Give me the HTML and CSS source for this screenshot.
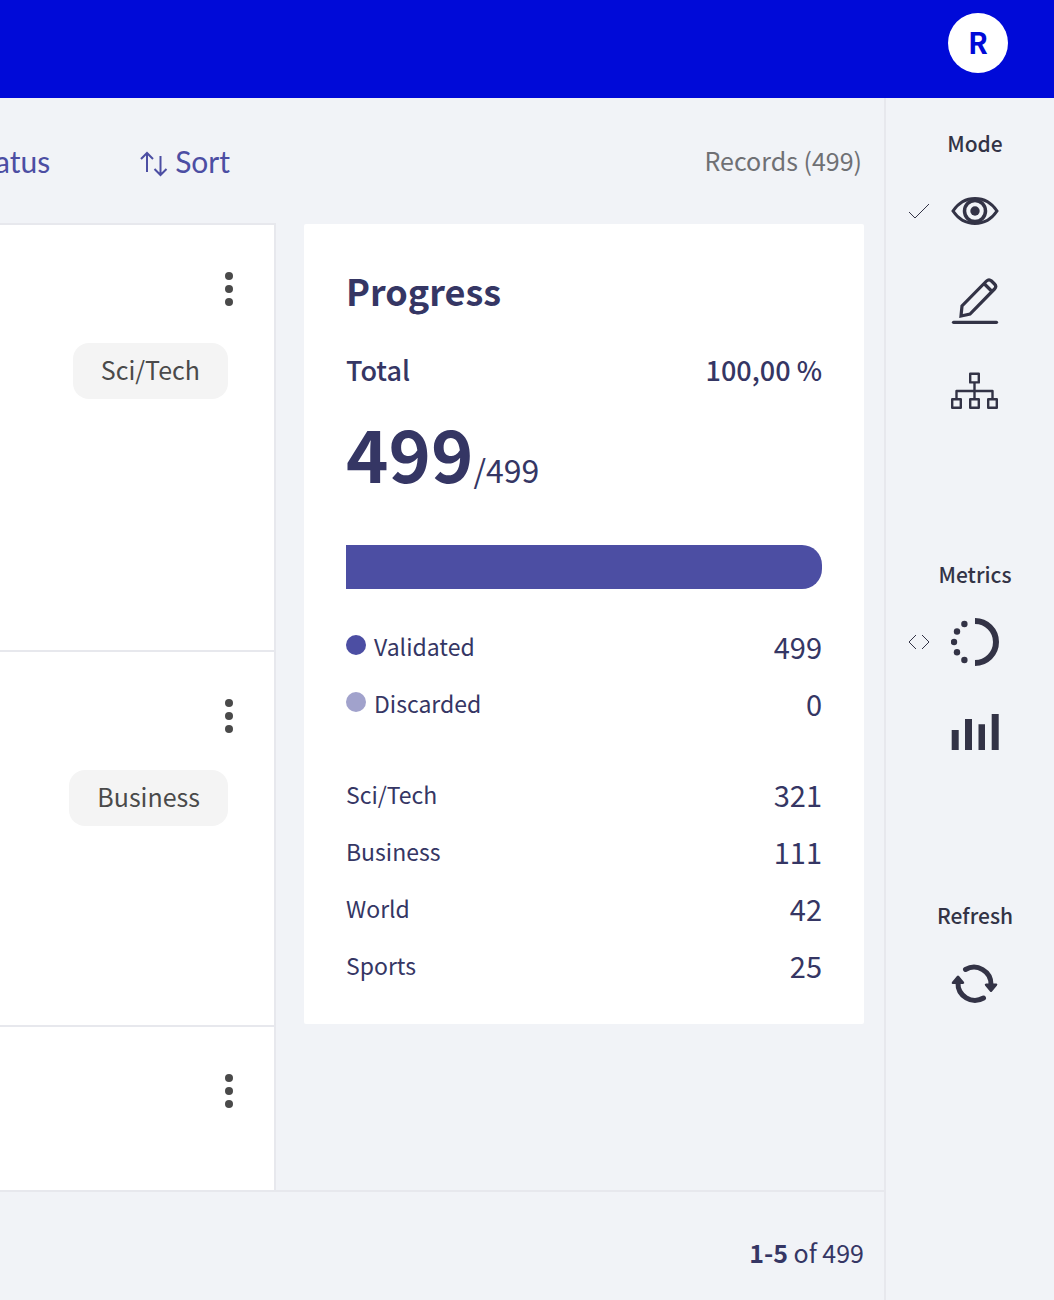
FILE: index.html
```html
<!DOCTYPE html>
<html lang="en">
<head>
<meta charset="utf-8">
<meta name="viewport" content="width=device-width, initial-scale=1">
<title>Records</title>
<link rel="stylesheet" href="styles.css">
</head>
<body>
<header class="topbar">
  <button class="avatar" type="button" aria-label="User menu">R</button>
</header>
<div class="layout">
  <main class="main">
    <div class="toolbar">
      <div class="filters">
        <button class="filter" type="button">Status</button>
        <button class="filter" type="button">
          <svg class="sort-icon" viewBox="0 0 28 26" aria-hidden="true"><path d="M7 21V2M1 8l6-6 6 6M20.500 5v19M14.500 18l6 6 6-6"/></svg>
          Sort
        </button>
      </div>
      <p class="count">Records (499)</p>
    </div>
    <div class="content">
      <ul class="records">
        <li class="record record-tall">
          <button class="more" type="button" aria-label="Record actions"><svg viewBox="0 0 10 36"><circle cx="5" cy="5" r="4"/><circle cx="5" cy="18" r="4"/><circle cx="5" cy="31" r="4"/></svg></button>
          <span class="tag">Sci/Tech</span>
        </li>
        <li class="record">
          <button class="more" type="button" aria-label="Record actions"><svg viewBox="0 0 10 36"><circle cx="5" cy="5" r="4"/><circle cx="5" cy="18" r="4"/><circle cx="5" cy="31" r="4"/></svg></button>
          <span class="tag">Business</span>
        </li>
        <li class="record record-last">
          <button class="more" type="button" aria-label="Record actions"><svg viewBox="0 0 10 36"><circle cx="5" cy="5" r="4"/><circle cx="5" cy="18" r="4"/><circle cx="5" cy="31" r="4"/></svg></button>
        </li>
      </ul>
      <section class="panel">
        <h2 class="panel-title">Progress</h2>
        <p class="total"><span>Total</span><span>100,00 %</span></p>
        <p class="tally"><strong>499</strong>/499</p>
        <div class="bar" role="progressbar" aria-label="Progress" aria-valuenow="100"><div class="bar-fill" style="width: 100%"></div></div>
        <dl class="stats">
          <div class="stat"><dt><span class="dot"></span>Validated</dt><dd>499</dd></div>
          <div class="stat"><dt><span class="dot dot-light"></span>Discarded</dt><dd>0</dd></div>
        </dl>
        <dl class="stats">
          <div class="stat"><dt>Sci/Tech</dt><dd>321</dd></div>
          <div class="stat"><dt>Business</dt><dd>111</dd></div>
          <div class="stat"><dt>World</dt><dd>42</dd></div>
          <div class="stat"><dt>Sports</dt><dd>25</dd></div>
        </dl>
      </section>
    </div>
    <footer class="footer"><p><strong>1-5</strong> of 499</p></footer>
  </main>
  <aside class="sidebar">
    <section class="group">
      <h3 class="group-title">Mode</h3>
      <button class="tool" type="button" aria-label="Explore">
        <svg class="mark" viewBox="0 0 22 22" aria-hidden="true"><path d="M1 12l6 6L21 4"/></svg>
        <svg class="icon" viewBox="0 0 48 48" aria-hidden="true"><path class="line" stroke-width="3" d="M2 24C8 15 16 11.500 24 11.500S40 15 46 24C40 33 32 36.500 24 36.500S8 33 2 24Z"/><circle class="line" stroke-width="3.500" cx="24" cy="24" r="10.500"/><circle cx="24" cy="24" r="4.700"/></svg>
      </button>
      <button class="tool" type="button" aria-label="Annotate">
        <svg class="icon" viewBox="0 0 48 48" aria-hidden="true"><path class="line" stroke-width="3.200" d="M10 39l1-10L35.500 4Q38 1.500 40.500 4l3 3Q46 9.500 43.500 12L19 37ZM33 6.500l8 8"/><path class="line" stroke-width="3.200" stroke-linecap="round" d="M2.500 45.300h43"/></svg>
      </button>
      <button class="tool" type="button" aria-label="Define rules">
        <svg class="icon" viewBox="0 0 48 48" aria-hidden="true"><g class="line" stroke-width="2.400" stroke-linejoin="round"><path d="M23.500 16v16M5.500 32v-8h36v8"/><path d="M19.200 6.800h8.600v8.600h-8.600zM1.200 32.200h8.600v8.600H1.200zM19.200 32.200h8.600v8.600h-8.600zM37.200 32.200h8.600v8.600h-8.600z"/></g></svg>
      </button>
    </section>
    <section class="group">
      <h3 class="group-title">Metrics</h3>
      <button class="tool" type="button" aria-label="Progress">
        <svg class="mark" viewBox="0 0 22 22" aria-hidden="true"><path d="M8 4l-7 7 7 7M14 4l7 7-7 7"/></svg>
        <svg class="icon" viewBox="0 0 48 48" aria-hidden="true"><path class="line" stroke-width="6" d="M24 3a21 21 0 0 1 0 42"/><circle cx="13.400" cy="6" r="3.200"/><circle cx="6" cy="13.500" r="3.200"/><circle cx="3" cy="24" r="3.200"/><circle cx="6" cy="34.300" r="3.200"/><circle cx="13.400" cy="42" r="3.200"/></svg>
      </button>
      <button class="tool" type="button" aria-label="Stats">
        <svg class="icon" viewBox="0 0 48 48" aria-hidden="true"><path d="M.700 22h7v20h-7zM14 11h7v31h-7zM27.500 16.200h6.500v25.800h-6.500zM40.700 6h7v36h-7z"/></svg>
      </button>
    </section>
    <section class="group">
      <h3 class="group-title">Refresh</h3>
      <button class="tool" type="button" aria-label="Refresh">
        <svg class="icon" viewBox="0 0 48 48" aria-hidden="true"><g class="line" stroke-width="5" stroke-linecap="round"><path d="M14.500 10.500A17 17 0 0 1 40 25.500"/><path d="M32.500 39A17 17 0 0 1 7 23.500"/></g><path d="M35 24.500h10.500q1.500.5.5 2l-5 6q-1 1-2 0l-5-6q-1-1.500 1-2zM12 25H1.500q-1.500-.5-.5-2l5-6q1-1 2 0l5 6q1 1.500-1 2z"/></svg>
      </button>
    </section>
  </aside>
</div>
</body>
</html>
```
FILE: styles.css
```css
* {
  box-sizing: border-box;
  margin: 0;
  padding: 0;
}

body {
  display: flex;
  flex-direction: column;
  min-height: 100vh;
  background: #f1f3f7;
  color: #353664;
  font-family: "Noto Sans CJK SC", "Noto Sans", sans-serif;
  font-size: 25px;
  line-height: 36px;
  overflow-x: hidden;
}

button {
  border: 0;
  background: none;
  color: inherit;
  font: inherit;
  cursor: pointer;
}

svg {
  display: block;
  fill: currentColor;
}

.line {
  fill: none;
  stroke: currentColor;
}

.topbar {
  display: flex;
  justify-content: flex-end;
  padding: 13px 46px 25px;
  background: #000ad8;
}

.avatar {
  width: 60px;
  height: 60px;
  padding-bottom: 4px;
  border-radius: 50%;
  background: #fff;
  color: #000ad8;
  font-size: 29px;
  font-weight: 700;
}

.layout {
  display: flex;
  flex: 1;
}

.main {
  display: flex;
  flex: 1;
  flex-direction: column;
  min-width: 0;
}

.toolbar,
.content {
  display: grid;
  grid-template-columns: minmax(0, 1fr) 560px;
  column-gap: 28px;
  padding-right: 20px;
}

.toolbar {
  align-items: center;
  height: 125px;
}

.filters {
  display: flex;
  justify-content: flex-end;
  gap: 90px;
  padding-right: 46px;
}

.filter {
  display: flex;
  align-items: center;
  gap: 7px;
  color: #4c4ea3;
  font-family: Lato, sans-serif;
  font-size: 30px;
}

.sort-icon {
  width: 28px;
  height: 26px;
  margin-top: 7px;
  fill: none;
  stroke: currentColor;
  stroke-width: 2;
}

.count {
  padding: 0 2px 2px 0;
  color: #6f7074;
  text-align: right;
}

.content {
  flex: 1;
}

.records {
  display: flex;
  flex-direction: column;
  border: 2px solid #e7e8ed;
  border-width: 2px 2px 0 0;
  background: #fff;
  list-style: none;
}

.record {
  display: flex;
  flex-direction: column;
  align-items: flex-end;
  gap: 36px;
  min-height: 375px;
  padding: 46px 46px 46px 0;
  border-bottom: 2px solid #e7e8ed;
  color: #4a4a4a;
}

.record-tall {
  min-height: 427px;
}

.record-last {
  flex: 1;
  min-height: 0;
  border-bottom: 0;
}

.more {
  width: 10px;
  height: 36px;
  margin-right: -6px;
}

.tag {
  padding: 8px 28px 12px;
  border-radius: 16px;
  background: #f4f4f4;
}

.panel {
  align-self: start;
  margin-top: 1px;
  padding: 42px 42px 30px;
  border-radius: 2px;
  background: #fff;
}

.panel-title {
  font-size: 36px;
  line-height: 48px;
}

.total {
  display: flex;
  justify-content: space-between;
  margin-top: 38px;
  font-size: 27px;
  font-weight: 500;
}

.tally {
  margin-top: 20px;
  font-size: 32px;
  line-height: 88px;
}

.tally strong {
  font-size: 72px;
}

.bar {
  height: 44px;
  margin-top: 32px;
}

.bar-fill {
  height: 100%;
  border-radius: 0 20px 20px 0;
  background: #4c4ea3;
}

.stats {
  margin-top: 34px;
}

.bar + .stats {
  margin-top: 29px;
}

.stat {
  display: flex;
  align-items: center;
  justify-content: space-between;
  height: 57px;
  line-height: 57px;
}

.stat dt {
  display: flex;
  align-items: center;
  gap: 8px;
  font-size: 23px;
}

.stat dd {
  font-size: 29px;
}

.dot {
  width: 20px;
  height: 20px;
  margin-bottom: 4px;
  border-radius: 50%;
  background: #4c4ea3;
}

.dot-light {
  background: #a1a2cc;
}

.footer {
  height: 110px;
  padding: 42px 20px;
  border-top: 2px solid #e7e8ed;
  text-align: right;
}

.sidebar {
  width: 170px;
  padding-top: 25px;
  border-left: 2px solid #e7e8ed;
  color: #333346;
}

.group + .group {
  margin-top: 118px;
}

.group-title {
  margin-bottom: 3px;
  padding-left: 10px;
  font-size: 21px;
  font-weight: 500;
  line-height: 40px;
  text-align: center;
}

.tool {
  display: grid;
  grid-template-columns: 22px 48px;
  align-items: center;
  column-gap: 21px;
  width: 100%;
  height: 90px;
  padding-left: 22px;
}

.mark {
  width: 22px;
  height: 22px;
  fill: none;
  stroke: currentColor;
}

.icon {
  grid-column: 2;
  width: 48px;
  height: 48px;
}
```
